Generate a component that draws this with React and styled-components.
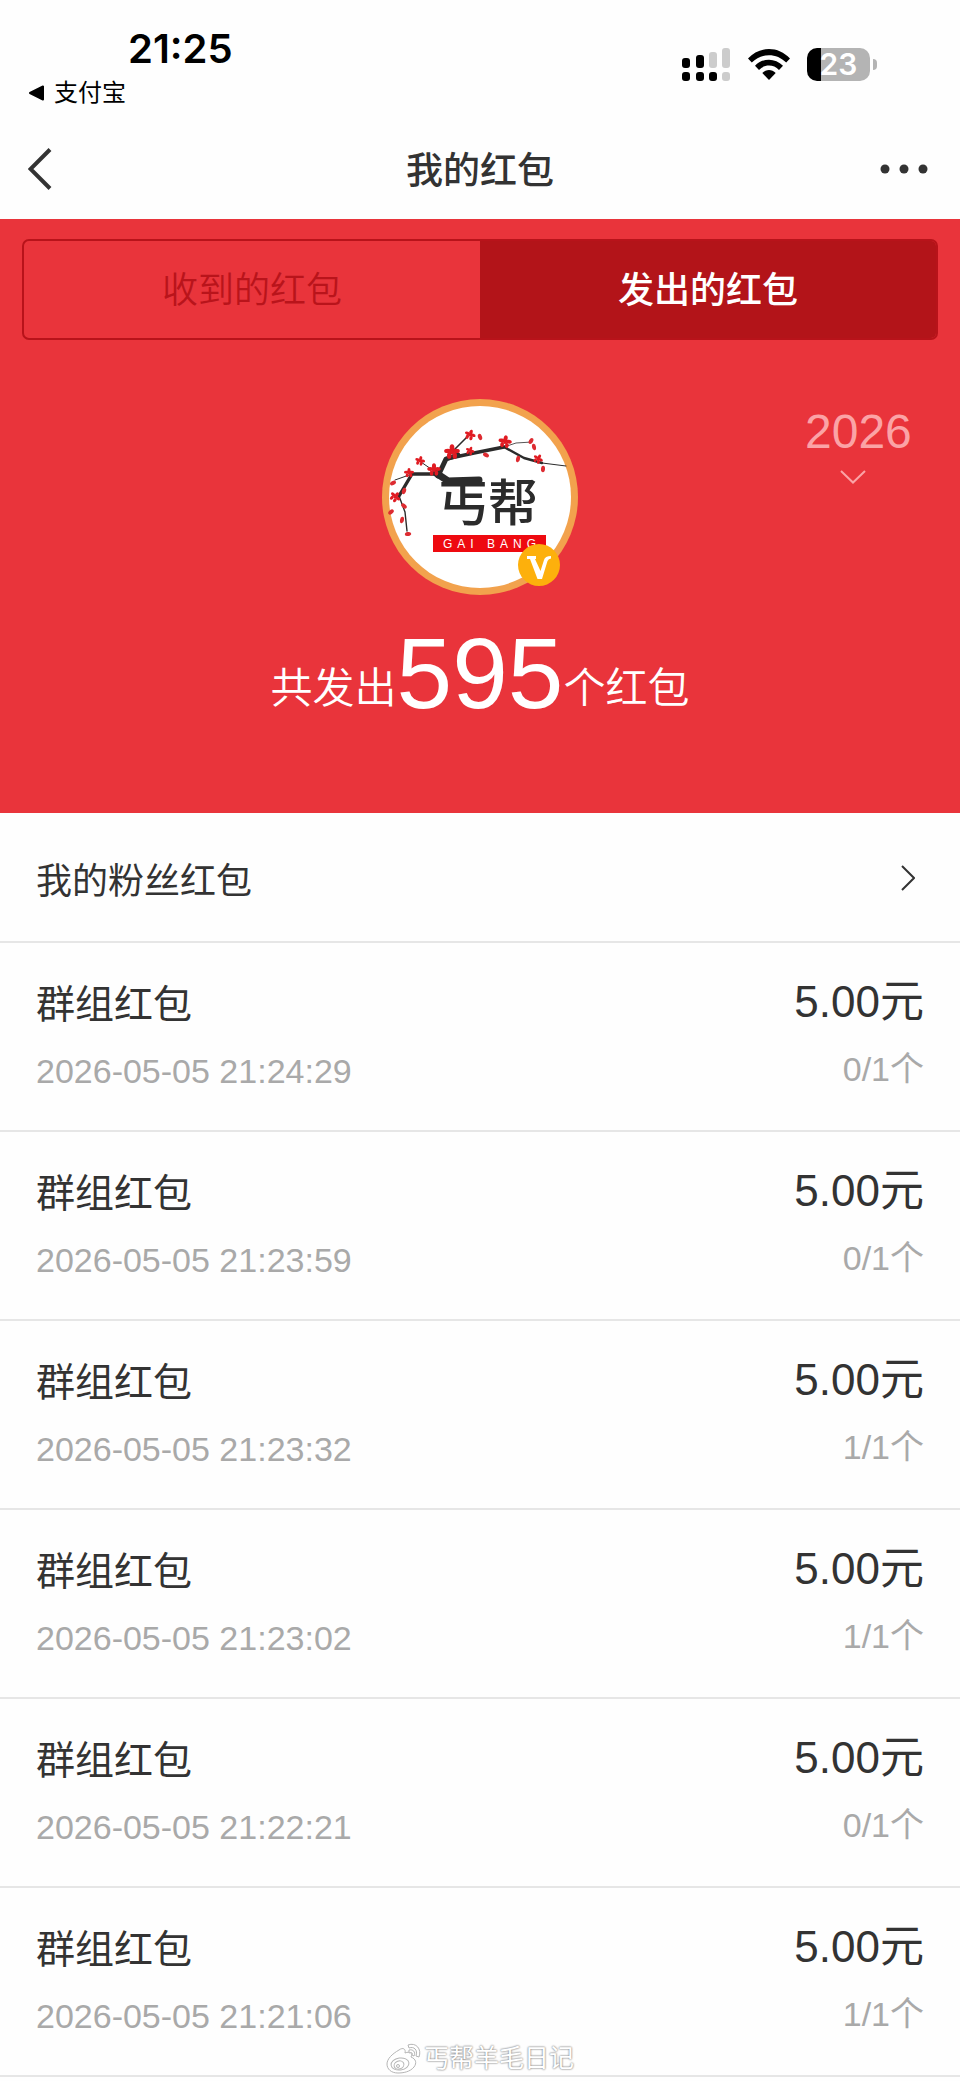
import React, { useState } from "react";
import styled, { createGlobalStyle } from "styled-components";

const GlobalStyle = createGlobalStyle`
  *, *::before, *::after { box-sizing: border-box; }
  body {
    margin: 0;
    background: #fefefe;
    color: #333333;
    font-family: "Liberation Sans", "Noto Sans CJK SC", sans-serif;
  }
  button, select { font: inherit; color: inherit; }
`;

const Page = styled.div`
  position: relative;
  min-height: 100vh;
  padding-bottom: 4px;
  background: #fefefe;
`;

/* ---------- status bar ---------- */

const StatusBar = styled.div`
  display: flex;
  justify-content: space-between;
  align-items: flex-start;
  height: 120px;
  padding: 25px 83px 0 28px;
  color: #000000;
`;

const Clock = styled.div`
  padding-left: 100px;
  font-family: Inter, sans-serif;
  font-size: 40px;
  font-weight: 600;
  line-height: 48px;
`;

const ReturnLink = styled.a`
  display: flex;
  align-items: center;
  gap: 9px;
  font-size: 24px;
  line-height: 40px;
  color: inherit;
  text-decoration: none;
`;

const StatusIcons = styled.div`
  display: flex;
  align-items: center;
  gap: 17px;
  padding-top: 23px;
`;

const Icon = styled.svg`
  display: block;
  flex: none;
`;

const Battery = styled.div`
  display: flex;
  align-items: center;
  gap: 3px;

  &::after {
    content: "";
    width: 4px;
    height: 11px;
    border-radius: 0 4px 4px 0;
    background: #b4b4b4;
  }
`;

const BatteryLevel = styled.div`
  width: 63px;
  height: 33px;
  border-radius: 10px;
  background: linear-gradient(to right, #000000 ${(p) => p.$level}%, #b4b4b4 ${(p) => p.$level}%);
  color: #ffffff;
  font-family: Inter, sans-serif;
  font-size: 30px;
  font-weight: 600;
  line-height: 33px;
  text-align: center;
`;

/* ---------- navigation ---------- */

const NavBar = styled.header`
  display: grid;
  grid-template-columns: 1fr auto 1fr;
  align-items: center;
  height: 99px;
  padding: 0 28px 2px;
`;

const Title = styled.h1`
  margin: 0;
  padding-top: 6px;
  font-size: 37px;
  font-weight: 500;
  line-height: 56px;
`;

const IconButton = styled.button`
  display: block;
  justify-self: ${(p) => p.$side};
  padding: 0;
  border: 0;
  background: none;
  cursor: pointer;
`;

/* ---------- red summary ---------- */

const Hero = styled.section`
  padding: 20px 22px 90px;
  background: #e9343b;
  color: #ffffff;
`;

const Tabs = styled.div`
  display: flex;
  height: 101px;
  border: 2px solid #b8131a;
  border-radius: 7px;
  overflow: hidden;
`;

const Tab = styled.button`
  flex: 1;
  padding: 3px 0 0;
  border: 0;
  background: ${(p) => (p.$active ? "#b31419" : "transparent")};
  color: ${(p) => (p.$active ? "#ffffff" : "#b9141b")};
  font-size: 36px;
  font-weight: ${(p) => (p.$active ? 500 : 350)};
  line-height: 52px;
  cursor: pointer;
`;

const Profile = styled.div`
  display: grid;
  grid-template-columns: 1fr auto 1fr;
  padding-top: 59px;
`;

const AvatarFrame = styled.div`
  grid-column: 2;
  position: relative;
  width: 196px;
  height: 196px;
`;

const Badge = styled(Icon)`
  position: absolute;
  right: 18px;
  bottom: 9px;
`;

const YearPicker = styled.label`
  display: flex;
  flex-direction: column;
  align-items: center;
  justify-self: end;
  gap: 14px;
  padding: 9px 26px 0 0;
  color: #fba3a6;
`;

const YearSelect = styled.select`
  appearance: none;
  padding: 0;
  border: 0;
  background: none;
  font-size: 48px;
  line-height: 48px;
  cursor: pointer;
`;

const YearArrow = styled(Icon)`
  margin-right: 12px;
`;

const Total = styled.p`
  display: flex;
  justify-content: center;
  align-items: flex-end;
  margin: 28px 0 0;
  font-size: 42px;
  font-weight: 350;
  line-height: 68px;
`;

const TotalNumber = styled.strong`
  font-size: 100px;
  font-weight: 400;
  line-height: 100px;
`;

/* ---------- list ---------- */

const FanLink = styled.a`
  display: flex;
  justify-content: space-between;
  align-items: center;
  height: 130px;
  padding: 2px 45px 0 36px;
  border-bottom: 2px solid #e6e6e6;
  color: inherit;
  text-decoration: none;
`;

const FanLabel = styled.span`
  padding-top: 8px;
  font-size: 36px;
  line-height: 52px;
`;

const List = styled.ul`
  margin: 0;
  padding: 0;
  list-style: none;
`;

const Item = styled.li`
  display: flex;
  justify-content: space-between;
  height: 189px;
  padding: 32px 36px 0;
  border-bottom: 2px solid #e6e6e6;
`;

const Column = styled.div`
  display: flex;
  flex-direction: column;
  gap: ${(p) => (p.$end ? 20 : 16)}px;
  text-align: ${(p) => (p.$end ? "right" : "left")};
`;

const Name = styled.span`
  font-size: 39px;
  line-height: 60px;
`;

const Amount = styled.span`
  font-size: 44px;
  line-height: 54px;
`;

const Meta = styled.span`
  color: #a9a9a9;
  font-size: 34px;
  line-height: 40px;
`;

const Watermark = styled.div`
  position: absolute;
  left: 0;
  right: 0;
  bottom: 5px;
  display: flex;
  justify-content: center;
  align-items: center;
  gap: 3px;
  color: #ffffff;
  font-size: 25px;
  line-height: 36px;
  text-shadow: 0 0 2px #808080, 0 0 2px #9a9a9a;
  pointer-events: none;
`;

const packets = [
  { time: "2026-05-05 21:24:29", opened: 0 },
  { time: "2026-05-05 21:23:59", opened: 0 },
  { time: "2026-05-05 21:23:32", opened: 1 },
  { time: "2026-05-05 21:23:02", opened: 1 },
  { time: "2026-05-05 21:22:21", opened: 0 },
  { time: "2026-05-05 21:21:06", opened: 1 },
];

function SignalIcon() {
  const bars = [
    [0, 10, 10, "#000"],
    [14, 7, 13, "#000"],
    [27, 4, 16, "#cccccc"],
    [40, 0, 20, "#cccccc"],
  ];
  return (
    <Icon width="49" height="33" viewBox="0 0 49 33" aria-hidden="true">
      {bars.map(([x, y, h, fill]) => (
        <rect key={x} x={x} y={y} width="8" height={h} rx="3" fill={fill} />
      ))}
      {bars.map(([x], i) => (
        <rect key={x} x={x} y="24" width="8" height="9" rx="3" fill={i < 3 ? "#000" : "#cccccc"} />
      ))}
    </Icon>
  );
}

function WifiIcon() {
  return (
    <Icon width="42" height="31" viewBox="0 0 42 31" aria-hidden="true">
      <path d="M0 9.6C11.5-3.2 30.5-3.2 42 9.6L38.2 13.6C28.8 3.7 13.2 3.7 3.8 13.6Z" />
      <path d="M7 16.8C14.8 8.6 27.2 8.6 35 16.8L31 20.9C25.5 15 16.5 15 11 20.9Z" />
      <path d="M14.3 24.1C18.2 19.9 23.8 19.9 27.7 24.1L21 31Z" />
    </Icon>
  );
}

function Blossom({ x, y, s = 1, r = 0 }) {
  return (
    <g transform={`translate(${x} ${y}) rotate(${r}) scale(${s})`} fill="#e01b22">
      <ellipse cx="0" cy="-3" rx="1.7" ry="2.6" />
      <ellipse cx="3" cy="-0.8" rx="2.6" ry="1.6" />
      <ellipse cx="2" cy="2.6" rx="1.6" ry="2.2" />
      <ellipse cx="-2" cy="2.6" rx="1.6" ry="2.2" />
      <ellipse cx="-3" cy="-0.8" rx="2.6" ry="1.6" />
      <circle r="1.6" />
    </g>
  );
}

function Bud({ x, y, r = 0 }) {
  return <ellipse cx={x} cy={y} rx="2" ry="3.2" transform={`rotate(${r} ${x} ${y})`} fill="#dd2b31" />;
}

function Avatar() {
  return (
    <Icon width="196" height="196" viewBox="0 0 196 196" role="img" aria-label="丐帮">
      <circle cx="98" cy="98" r="98" fill="#f2a24d" />
      <circle cx="98" cy="98" r="91" fill="#ffffff" />
      <g fill="none" stroke="#2b2b2b" strokeLinecap="round" strokeLinejoin="round">
        <path d="M97 81L66 82L54 74" strokeWidth="7" />
        <path d="M56 77L64 60L76 56" strokeWidth="5" />
        <path d="M64 60L92 54L122 48" strokeWidth="3.4" />
        <path d="M122 48L142 59L160 64" strokeWidth="2.4" />
        <path d="M160 64L184 67" strokeWidth="1" />
        <path d="M122 48L134 44L150 43" strokeWidth="0.8" />
        <path d="M55 75L30 75L17 97" strokeWidth="3.4" />
        <path d="M17 97L23 113L25 132" strokeWidth="1.4" />
        <path d="M52 72L36 61" strokeWidth="1" />
        <path d="M68 55L86 37" strokeWidth="1.6" />
        <path d="M30 75L13 81" strokeWidth="1" />
      </g>
      <Blossom x="70" y="53" s="1.4" />
      <Blossom x="88" y="36" s="1" r="20" />
      <Blossom x="52" y="71" s="1.2" />
      <Blossom x="38" y="62" s="0.9" r="15" />
      <Blossom x="27" y="74" s="0.9" />
      <Blossom x="13" y="98" s="1" r="40" />
      <Blossom x="123" y="43" s="1.2" r="10" />
      <Blossom x="156" y="60" s="0.9" r="30" />
      <Blossom x="88" y="52" s="0.8" r="20" />
      <Bud x="98" y="38" r="-20" />
      <Bud x="104" y="56" r="-60" />
      <Bud x="136" y="60" r="10" />
      <Bud x="161" y="70" r="5" />
      <Bud x="149" y="42" r="30" />
      <Bud x="152" y="48" r="-10" />
      <Bud x="22" y="92" r="20" />
      <Bud x="11" y="84" r="60" />
      <Bud x="22" y="107" r="-50" />
      <Bud x="20" y="121" r="10" />
      <Bud x="26" y="135" r="80" />
      <Bud x="9" y="113" r="50" />
      <text
        x="56"
        y="122"
        fill="#2b2b2b"
        fontFamily='"Noto Sans CJK SC", sans-serif'
        fontSize="50"
        fontWeight="500"
      >
        丐帮
      </text>
      <rect x="51" y="136" width="113" height="17" fill="#ee0a10" />
      <text
        x="61"
        y="149"
        fill="#ffffff"
        fontFamily='"Liberation Sans", sans-serif'
        fontSize="12"
        letterSpacing="5"
      >
        GAI BANG
      </text>
    </Icon>
  );
}

function VerifiedBadge() {
  return (
    <Badge width="42" height="42" viewBox="0 0 42 42" role="img" aria-label="V">
      <circle cx="21" cy="21" r="21" fill="#fdb00c" />
      <path d="M9 12H18V15H17L22.5 27L26 16Q27 12 33 12V14.5Q30.5 14.5 29.5 17L24 35H19.5L12 15H9Z" fill="#ffffff" />
    </Badge>
  );
}

function WeiboIcon() {
  return (
    <Icon width="35" height="31" viewBox="0 0 35 31" aria-hidden="true">
      <g fill="#ffffff" stroke="#b5b5b5" strokeWidth="1">
        <path d="M13 7C17 4 20 6 19 10C24 8 27 10 25 14C30 16 31 20 28 24C24 29 17 30 12 30C5 30 1 26 1 21C1 16 6 11 13 7Z" />
        <ellipse cx="14" cy="21" rx="9" ry="6" transform="rotate(-8 14 21)" />
        <ellipse cx="13" cy="22" rx="5" ry="4" transform="rotate(-20 13 22)" />
        <circle cx="12" cy="23" r="1.5" />
        <path d="M22 2C30-1 36 6 33 14L30 13C32 7 28 3 23 5Z" />
        <path d="M23 7C27 6 30 9 28 13L26 12C27 10 26 9 23 10Z" />
      </g>
    </Icon>
  );
}

export default function App() {
  const [tab, setTab] = useState("sent");
  return (
    <>
      <GlobalStyle />
      <Page>
        <StatusBar>
          <div>
            <Clock>21:25</Clock>
            <ReturnLink href="#alipay">
              <Icon width="17" height="16" viewBox="0 0 17 16" aria-hidden="true">
                <path d="M2 8L15 1.5V14.5Z" stroke="#000" strokeWidth="2" strokeLinejoin="round" />
              </Icon>
              支付宝
            </ReturnLink>
          </div>
          <StatusIcons>
            <SignalIcon />
            <WifiIcon />
            <Battery>
              <BatteryLevel $level={23}>23</BatteryLevel>
            </Battery>
          </StatusIcons>
        </StatusBar>

        <NavBar>
          <IconButton $side="start" type="button" aria-label="返回">
            <Icon width="24" height="42" viewBox="0 0 24 42" fill="none" stroke="#333333" strokeWidth="4">
              <path d="M22 1.5L2.5 21L22 40.5" />
            </Icon>
          </IconButton>
          <Title>我的红包</Title>
          <IconButton $side="end" type="button" aria-label="更多">
            <Icon width="52" height="10" viewBox="0 0 52 10" fill="#333333">
              <circle cx="5" cy="5" r="4.5" />
              <circle cx="24" cy="5" r="4.5" />
              <circle cx="43" cy="5" r="4.5" />
            </Icon>
          </IconButton>
        </NavBar>

        <Hero>
          <Tabs role="tablist">
            <Tab
              type="button"
              role="tab"
              aria-selected={tab === "received"}
              $active={tab === "received"}
              onClick={() => setTab("received")}
            >
              收到的红包
            </Tab>
            <Tab
              type="button"
              role="tab"
              aria-selected={tab === "sent"}
              $active={tab === "sent"}
              onClick={() => setTab("sent")}
            >
              发出的红包
            </Tab>
          </Tabs>
          <Profile>
            <AvatarFrame>
              <Avatar />
              <VerifiedBadge />
            </AvatarFrame>
            <YearPicker>
              <YearSelect aria-label="年份" defaultValue="2026">
                <option>2026</option>
              </YearSelect>
              <YearArrow width="26" height="14" viewBox="0 0 26 14" fill="none" stroke="currentColor" strokeWidth="2">
                <path d="M1 1L13 12.5L25 1" />
              </YearArrow>
            </YearPicker>
          </Profile>
          <Total>
            共发出<TotalNumber>595</TotalNumber>个红包
          </Total>
        </Hero>

        <FanLink href="#fans">
          <FanLabel>我的粉丝红包</FanLabel>
          <Icon width="14" height="26" viewBox="0 0 14 26" fill="none" stroke="#333333" strokeWidth="2">
            <path d="M1 1L13 13L1 25" />
          </Icon>
        </FanLink>
        <List>
          {packets.map((p) => (
            <Item key={p.time}>
              <Column>
                <Name>群组红包</Name>
                <Meta>{p.time}</Meta>
              </Column>
              <Column $end>
                <Amount>5.00元</Amount>
                <Meta>{p.opened}/1个</Meta>
              </Column>
            </Item>
          ))}
        </List>
        <Watermark>
          <WeiboIcon />
          丐帮羊毛日记
        </Watermark>
      </Page>
    </>
  );
}
